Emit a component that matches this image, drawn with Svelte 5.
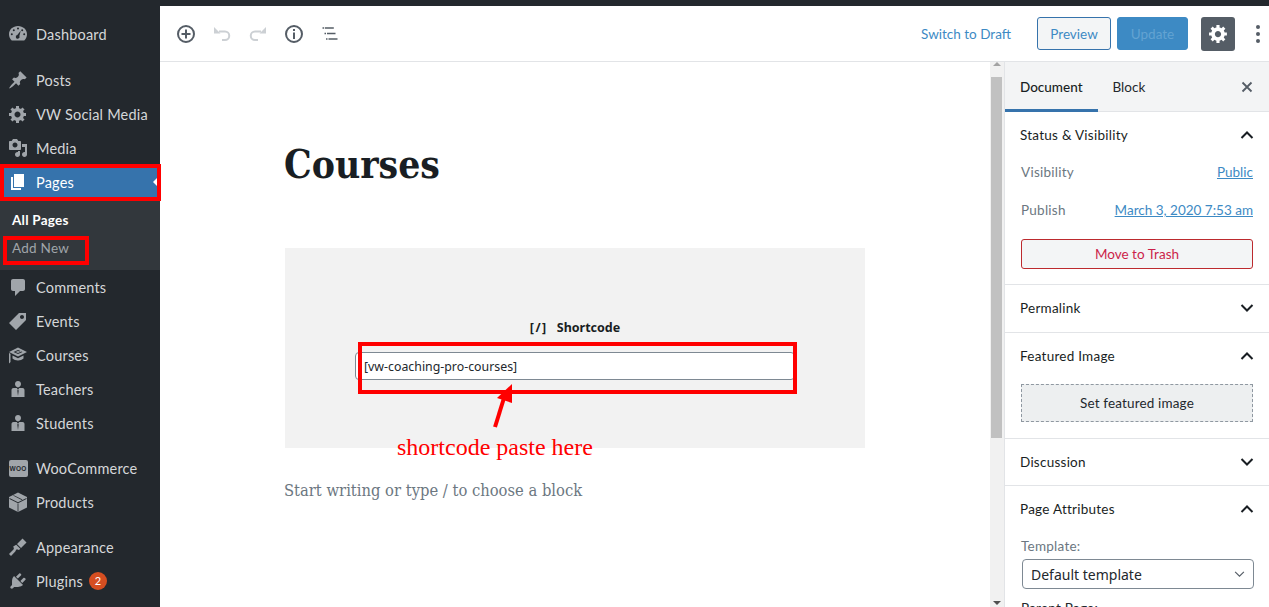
<script lang="ts">
	const icons = {
		pin: 'M10.44 3.02l1.82-1.82 6.36 6.35-1.83 1.82c-1.05-.68-2.48-.57-3.41.36l-.75.75c-.92.93-1.04 2.35-.35 3.41l-1.83 1.82-2.41-2.41-2.8 2.79c-.42.42-3.38 2.71-3.8 2.29s1.86-3.39 2.28-3.81l2.79-2.79L4.1 9.36l1.83-1.82c1.05.69 2.48.57 3.4-.36l.75-.75c.93-.92 1.05-2.35.36-3.41z',
		gear: 'M18 12h-2.18c-.17.7-.44 1.35-.81 1.93l1.54 1.54-2.1 2.1-1.54-1.54c-.58.36-1.23.63-1.91.79V19H8v-2.18c-.68-.16-1.33-.43-1.91-.79l-1.54 1.54-2.12-2.12 1.54-1.54c-.36-.58-.63-1.23-.79-1.91H1V9.03h2.17c.16-.7.44-1.35.8-1.94L2.43 5.55l2.1-2.1 1.54 1.54c.58-.37 1.24-.64 1.93-.81V2h3v2.18c.68.16 1.33.43 1.91.79l1.54-1.54 2.12 2.12-1.54 1.54c.36.59.64 1.24.8 1.94H18V12zm-8.5 1.5c1.66 0 3-1.34 3-3s-1.34-3-3-3-3 1.34-3 3 1.34 3 3 3z',
		media: 'M13 11V4c0-.55-.45-1-1-1h-1.67L9 1H5L3.67 3H2c-.55 0-1 .45-1 1v7c0 .55.45 1 1 1h10c.55 0 1-.45 1-1zM7 4.5c1.38 0 2.5 1.12 2.5 2.5S8.38 9.5 7 9.5 4.5 8.38 4.5 7 5.62 4.5 7 4.5zM14 6h5v10.5c0 1.38-1.12 2.5-2.5 2.5S14 17.88 14 16.5s1.12-2.5 2.5-2.5c.17 0 .34.02.5.05V9h-3V6zm-4 8.05V13h2v3.5c0 1.38-1.12 2.5-2.5 2.5S7 17.88 7 16.5 8.12 14 9.5 14c.17 0 .34.02.5.05z',
		pages: 'M6 15V2h10v13H6zm-1 1h8v2H3V5h2v11z',
		comment: 'M5 2h10c1.1 0 2 .9 2 2v8c0 1.1-.9 2-2 2h-3l-5 5v-5H5c-1.1 0-2-.9-2-2V4c0-1.1.9-2 2-2z',
		tag: 'M11 2h7v7L8 19l-7-7zm3 6c1.1 0 2-.9 2-2s-.9-2-2-2-2 .9-2 2 .9 2 2 2z',
		learn: 'M10 2.500L19 7l-9 4.500L1 7zM10 5L5.500 7 10 9l4.500-2-1-.5L10 8 7.500 7 10 6l1.500.5 1-.5zM4.500 10.500L10 13.200l5.500-2.700v3c-2.500 2.500-8.500 2.500-11 0zM1 8l1.500.7V17L1 18.500z',
		person: 'M10 2c1.700 0 3 1.300 3 3s-1.300 3.400-3 3.400S7 6.700 7 5s1.300-3 3-3zM5.500 9h3.300L10 11l1.200-2h3.300c1.100 0 2 .9 2 2v7h-13v-7c0-1.100.9-2 2-2zM9.300 11.500L10 17l.7-5.500-.7-.8z',
		box: 'M10 .5L19 5v10.500L10 20l-9-4.500V5zM1.500 6l8.500 4.300L18.500 6v.9L10 11.200 1.500 6.900zM9.600 11.500h.8V19.500h-.8zM5 3.600l.8-.4 8.700 4.300-.8.4z',
		brush: 'M14.500 1.500l4 4-5.500 5.500-4-4zM8.200 7.700l4.100 4.100-1.300 1.300-2.200-.9c-.7.5-1.200 1.300-1.500 2.200L3 19l-2-2 4-4c.5-.5.900-1 .900-1.800L5.200 9.500z',
		plug: 'M13.11 4.36L9.87 7.6 8 5.73l3.24-3.24c.35-.34 1.05-.2 1.56.32.52.51.66 1.21.31 1.55zm-8 1.77l.91-1.12 9.01 9.01-1.19.84c-.71.71-2.63 1.16-3.82 1.16H6.14L4.9 17.26c-.59.59-1.54.59-2.12 0-.59-.58-.59-1.53 0-2.12l1.24-1.24v-3.88c0-1.13.4-3.19 1.09-3.89zm7.26 3.97l3.24-3.24c.34-.35 1.04-.21 1.55.31.52.51.66 1.21.31 1.55l-3.24 3.25z',
		dash: 'M3.760 16.500C2.050 14.900 1 12.600 1 10.200 1 5.600 5 2 10 2s9 3.600 9 8.200c0 2.400-1.050 4.700-2.760 6.300H3.760zM10 3.600a1 1 0 100 2 1 1 0 000-2zM5.800 5.300a1 1 0 100 2 1 1 0 000-2zM14.200 5.300a1 1 0 100 2 1 1 0 000-2zM3.800 9.300a1 1 0 100 2 1 1 0 000-2zM16.200 9.300a1 1 0 100 2 1 1 0 000-2zM12.700 6.700L9.300 11a1.900 1.900 0 102.100 1z'
	}

	const menu = [
		[{ label: 'Dashboard', icon: 'dash' }],
		[
			{ label: 'Posts', icon: 'pin' },
			{ label: 'VW Social Media', icon: 'gear' },
			{ label: 'Media', icon: 'media' },
			{ label: 'Pages', icon: 'pages', current: true, sub: ['All Pages', 'Add New'] },
			{ label: 'Comments', icon: 'comment' },
			{ label: 'Events', icon: 'tag' },
			{ label: 'Courses', icon: 'learn' },
			{ label: 'Teachers', icon: 'person' },
			{ label: 'Students', icon: 'person' }
		],
		[
			{ label: 'WooCommerce', icon: 'woo' },
			{ label: 'Products', icon: 'box' }
		],
		[
			{ label: 'Appearance', icon: 'brush' },
			{ label: 'Plugins', icon: 'plug', badge: 2 }
		]
	]
</script>

<div class="shell">
	<aside class="admin-menu">
		{#each menu as group}
			<ul class="group">
				{#each group as item}
					<li class="item" class:current={item.current}>
						<span class="item-icon">
							{#if item.icon === 'woo'}
								<span class="woo">WOO</span>
							{:else}
								<svg viewBox="0 0 20 20" width="20" height="20"><path d={icons[item.icon]} fill="currentColor" fill-rule="evenodd" /></svg>
							{/if}
						</span>
						<span>{item.label}</span>
						{#if item.badge}<span class="badge">{item.badge}</span>{/if}
					</li>
					{#if item.sub}
						<ul class="submenu">
							{#each item.sub as link, i}
								<li class:active={i === 0}>{link}</li>
							{/each}
						</ul>
					{/if}
				{/each}
			</ul>
		{/each}
	</aside>

	<div class="main">
		<header class="toolbar">
			<div class="tools">
				<svg class="tool" viewBox="0 0 24 24"><circle cx="12" cy="12" r="8" fill="none" stroke="currentColor" stroke-width="2" /><path d="M12 7.500v9M7.500 12h9" stroke="currentColor" stroke-width="2" /></svg>
				<svg class="tool faded" viewBox="0 0 24 24"><path d="M9 9.500h6a4 4 0 010 8.500h-3" fill="none" stroke="currentColor" stroke-width="2" /><path d="M4 5l0 6.500h6.500z" fill="currentColor" /></svg>
				<svg class="tool faded" viewBox="0 0 24 24"><path d="M15 9.500H9a4 4 0 000 8.500h3" fill="none" stroke="currentColor" stroke-width="2" /><path d="M20 5v6.500h-6.500z" fill="currentColor" /></svg>
				<svg class="tool" viewBox="0 0 24 24"><circle cx="12" cy="12" r="8" fill="none" stroke="currentColor" stroke-width="2" /><path d="M12 10.500V17M12 7v2" stroke="currentColor" stroke-width="2" /></svg>
				<svg class="tool" viewBox="0 0 24 24"><path d="M4.500 6h1.500M6.800 6h9M6.500 11.500h1.500M9 11.500h8.500M8 17h1.500M10.500 17h9" stroke="currentColor" stroke-width="1.500" /></svg>
			</div>
			<div class="actions">
				<a class="draft" href="#draft">Switch to Draft</a>
				<button class="btn preview">Preview</button>
				<button class="btn update">Update</button>
				<button class="settings" aria-label="Settings"><svg viewBox="0 0 20 20" width="21" height="21"><path d={icons.gear} fill="currentColor" fill-rule="evenodd" /></svg></button>
				<span class="more"><i></i><i></i><i></i></span>
			</div>
		</header>

		<div class="workspace">
			<main class="editor">
				<h1>Courses</h1>
				<div class="shortcode">
					<div class="sc-label"><b class="sc-glyph">[/]</b><b>Shortcode</b></div>
					<div class="sc-input">[vw-coaching-pro-courses]</div>
				</div>
				<p class="placeholder">Start writing or type / to choose a block</p>
			</main>

			<div class="scrollbar">
				<span class="arrow up"></span>
				<span class="thumb"></span>
				<span class="arrow down"></span>
			</div>

			<aside class="panel">
				<div class="tabs">
					<span class="tab on">Document</span>
					<span class="tab">Block</span>
					<svg class="close" viewBox="0 0 12 12" width="12" height="12"><path d="M1.500 1.500l9 9M10.500 1.500l-9 9" stroke="currentColor" stroke-width="1.800" /></svg>
				</div>

				<section class="sec first">
					<div class="sec-head">Status &amp; Visibility<svg class="chev" viewBox="0 0 14 8"><path d="M1.500 7L7 1.500 12.500 7" /></svg></div>
					<div class="row vis"><span>Visibility</span><a href="#public">Public</a></div>
					<div class="row pub"><span>Publish</span><a href="#date">March 3, 2020 7:53 am</a></div>
					<button class="trash">Move to Trash</button>
				</section>
				<section class="sec">
					<div class="sec-head">Permalink<svg class="chev" viewBox="0 0 14 8"><path d="M1.500 1L7 6.500 12.500 1" /></svg></div>
				</section>
				<section class="sec featured">
					<div class="sec-head">Featured Image<svg class="chev" viewBox="0 0 14 8"><path d="M1.500 7L7 1.500 12.500 7" /></svg></div>
					<button class="set-image">Set featured image</button>
				</section>
				<section class="sec discussion">
					<div class="sec-head">Discussion<svg class="chev" viewBox="0 0 14 8"><path d="M1.500 1L7 6.500 12.500 1" /></svg></div>
				</section>
				<section class="sec">
					<div class="sec-head">Page Attributes<svg class="chev" viewBox="0 0 14 8"><path d="M1.500 7L7 1.500 12.500 7" /></svg></div>
					<div class="tpl-label">Template:</div>
					<div class="select">Default template<svg viewBox="0 0 12 8" width="11" height="7"><path d="M1 1l5 5 5-5" fill="none" stroke="#555d66" stroke-width="1.300" /></svg></div>
					<div class="parent">Parent Page:</div>
				</section>
			</aside>
		</div>
	</div>

	<!-- red marks drawn over the screenshot -->
	<div class="mark mark-pages"></div>
	<div class="mark mark-add"></div>
	<div class="mark mark-code"></div>
	<svg class="mark-arrow" viewBox="0 0 30 50" width="30" height="50"><path d="M7 45L16 16" stroke="#f00" stroke-width="4" /><path d="M24 2L9 16l15 5z" fill="#f00" /></svg>
	<div class="mark-text">shortcode paste here</div>
</div>

<style>
	:global(body) {
		margin: 0;
		overflow: hidden;
		background: #fff;
	}

	.shell {
		position: relative;
		display: flex;
		width: 1269px;
		height: 607px;
		overflow: hidden;
		font-family: Lato, sans-serif;
		color: #23282d;
	}

	ul {
		margin: 0;
		padding: 0;
		list-style: none;
	}

	button {
		font-family: inherit;
		cursor: pointer;
	}

	.admin-menu {
		flex: none;
		width: 160px;
		padding-top: 17px;
		background: #23282d;
		color: #d5d7d9;
		box-sizing: border-box;
	}

	.group {
		margin-bottom: 11px;
	}

	.group:first-child {
		margin-bottom: 12px;
	}

	.item {
		display: flex;
		align-items: center;
		height: 34px;
		font-size: 14.5px;
		letter-spacing: 0.2px;
	}

	.item-icon {
		display: flex;
		justify-content: center;
		width: 36px;
		color: #a0a5aa;
	}

	.item.current {
		position: relative;
		background: #3673ac;
		color: #fff;
	}

	.item.current .item-icon {
		color: #fff;
	}

	.item.current::after {
		content: '';
		position: absolute;
		right: 2px;
		top: 12px;
		border: 5px solid transparent;
		border-right-color: #fff;
		border-left-width: 0;
	}

	.woo {
		display: block;
		width: 19px;
		height: 17px;
		border-radius: 2px;
		background: #a0a5aa;
		color: #23282d;
		font: bold 6.500px/17px 'Liberation Sans', sans-serif;
		text-align: center;
	}

	.badge {
		width: 18px;
		height: 18px;
		margin-left: 6px;
		border-radius: 50%;
		background: #d54e21;
		color: #fff;
		font-size: 11px;
		line-height: 18px;
		text-align: center;
	}

	.submenu {
		padding: 7px 0 8px 12px;
		background: #32373c;
		font-size: 13.500px;
		letter-spacing: 0.25px;
		color: #a0a5aa;
	}

	.submenu li {
		height: 28px;
		line-height: 28px;
	}

	.submenu .active {
		color: #fff;
		font-weight: 700;
	}

	.main {
		flex: 1;
		display: flex;
		flex-direction: column;
		min-width: 0;
		border-top: 6px solid #23282d;
	}

	.toolbar {
		flex: none;
		display: flex;
		justify-content: space-between;
		align-items: center;
		height: 55px;
		border-bottom: 1px solid #e2e4e7;
	}

	.tools {
		display: flex;
		gap: 12px;
		padding-left: 14px;
		color: #555d66;
	}

	.tool {
		width: 24px;
		height: 24px;
	}

	.tool.faded {
		color: #ccd0d4;
	}

	.actions {
		display: flex;
		align-items: center;
		font-size: 13.500px;
	}

	.draft {
		margin-right: 26px;
		color: #3d8ac4;
		text-decoration: none;
	}

	.btn {
		height: 33px;
		border-radius: 3px;
		font-size: 13.500px;
	}

	.preview {
		width: 74px;
		margin-right: 6px;
		border: 1px solid #3673ac;
		background: #f3f5f6;
		color: #3d8ac4;
	}

	.update {
		width: 71px;
		margin-right: 13px;
		border: 1px solid #3d8ac4;
		background: #3d8ac4;
		color: #63a3d2;
	}

	.settings {
		display: flex;
		align-items: center;
		justify-content: center;
		width: 34px;
		height: 34px;
		padding: 0;
		border: 0;
		border-radius: 3px;
		background: #555d66;
		color: #fff;
	}

	.more {
		display: flex;
		flex-direction: column;
		gap: 3px;
		padding: 0 9px 0 21px;
	}

	.more i {
		display: block;
		width: 4px;
		height: 4px;
		border-radius: 50%;
		background: #555d66;
	}

	.workspace {
		flex: 1;
		display: flex;
		min-height: 0;
	}

	.editor {
		flex: 1;
		min-width: 0;
		padding: 0 0 0 124px;
	}

	h1 {
		margin: 76px 0 0;
		font: 700 38.700px/54px 'DejaVu Serif Condensed', 'DejaVu Serif', serif;
		color: #191e23;
	}

	.shortcode {
		display: flex;
		flex-direction: column;
		width: 580px;
		height: 200px;
		margin-top: 56px;
		margin-left: 1px;
		box-sizing: border-box;
		padding-top: 72px;
		background: #f2f2f2;
		font-family: 'Noto Sans', sans-serif;
	}

	.sc-label {
		display: flex;
		justify-content: center;
		gap: 9px;
		font-size: 12.500px;
		line-height: 16px;
		color: #191e23;
	}

	.sc-glyph {
		letter-spacing: 1.500px;
	}

	.sc-input {
		width: 440px;
		height: 28px;
		margin: 16px 0 0 70px;
		padding-left: 8px;
		box-sizing: border-box;
		border: 1px solid #7e8993;
		border-radius: 4px;
		background: #fff;
		line-height: 28px;
		font-size: 12.350px;
		color: #23282d;
	}

	.placeholder {
		margin: 31px 0 0;
		font: 16.400px/24px 'DejaVu Serif Condensed', 'DejaVu Serif', serif;
		color: #6c7781;
	}

	.scrollbar {
		flex: none;
		position: relative;
		width: 15px;
		background: #f1f1f1;
		border-right: 1px solid #e2e4e7;
		box-sizing: border-box;
	}

	.thumb {
		position: absolute;
		left: 1px;
		top: 15px;
		width: 11px;
		height: 361px;
		background: #c1c1c1;
	}

	.arrow {
		position: absolute;
		left: 3px;
		border: 4px solid transparent;
	}

	.arrow.up {
		top: 0;
		border-top-width: 0;
		border-bottom-color: #a3a3a3;
	}

	.arrow.down {
		bottom: 2px;
		border-bottom-width: 0;
		border-top-color: #505050;
	}

	.panel {
		flex: none;
		width: 264px;
		font-size: 13.500px;
		letter-spacing: 0.25px;
		color: #23282d;
		overflow: hidden;
	}

	.tabs {
		display: flex;
		align-items: stretch;
		height: 50px;
		padding-right: 16px;
		box-sizing: border-box;
		background: #f3f4f5;
		border-bottom: 1px solid #e2e4e7;
		letter-spacing: 0;
	}

	.tab {
		display: flex;
		align-items: center;
		padding: 2px 15px 0;
		margin-bottom: -1px;
		border-bottom: 3px solid transparent;
		box-sizing: border-box;
	}

	.tab.on {
		border-bottom-color: #3673ac;
		color: #191e23;
		font-weight: 500;
	}

	.close {
		align-self: center;
		margin-left: auto;
		color: #555d66;
	}

	.sec {
		padding: 0 16px;
		border-bottom: 1px solid #e2e4e7;
	}

	.sec-head {
		display: flex;
		justify-content: space-between;
		align-items: center;
		height: 47px;
		margin: 0 -1px;
		padding-bottom: 1px;
		box-sizing: border-box;
		color: #191e23;
	}

	.discussion .sec-head {
		height: 46px;
	}

	.chev {
		width: 14px;
		height: 8px;
		fill: none;
		stroke: #191e23;
		stroke-width: 2;
	}

	.row {
		display: flex;
		justify-content: space-between;
		height: 20px;
		align-items: center;
		color: #6c7781;
	}

	.row a {
		color: #3d8ac4;
		letter-spacing: 0;
	}

	.vis {
		margin-top: 3px;
	}

	.pub {
		margin-top: 18px;
	}

	.first {
		padding-bottom: 15px;
	}

	.trash {
		display: block;
		width: 100%;
		height: 30px;
		margin-top: 19px;
		border: 1px solid #bc2a2e;
		border-radius: 3px;
		background: #f3f5f6;
		color: #cc1f4a;
		font-size: 13.500px;
	}

	.featured {
		padding-bottom: 16px;
	}

	.set-image {
		display: block;
		width: 100%;
		height: 38px;
		margin-top: 4px;
		border: 1px dashed #8f98a1;
		background: #edeff0;
		color: #23282d;
		font-size: 13.500px;
		letter-spacing: 0.15px;
	}

	.tpl-label {
		margin-top: 4px;
		line-height: 18px;
		color: #6c7781;
	}

	.select {
		display: flex;
		justify-content: space-between;
		align-items: center;
		height: 30px;
		margin: 4px -1px 0 1px;
		padding: 0 8px;
		box-sizing: border-box;
		border: 1px solid #7e8993;
		border-radius: 4px;
		font-family: 'Noto Sans', sans-serif;
		font-size: 14px;
		letter-spacing: 0;
	}

	.parent {
		margin-top: 11px;
		color: #23282d;
	}

	.mark {
		position: absolute;
		box-sizing: border-box;
		border: 4px solid #f00;
	}

	.mark-pages {
		left: 0;
		top: 164px;
		width: 161px;
		height: 37px;
	}

	.mark-add {
		left: 3px;
		top: 236px;
		width: 86px;
		height: 29px;
	}

	.mark-code {
		left: 358px;
		top: 342px;
		width: 439px;
		height: 52px;
	}

	.mark-arrow {
		position: absolute;
		left: 488px;
		top: 382px;
	}

	.mark-text {
		position: absolute;
		left: 397px;
		top: 433px;
		font: 24px/28px 'Liberation Serif', serif;
		color: #f00;
	}
</style>
